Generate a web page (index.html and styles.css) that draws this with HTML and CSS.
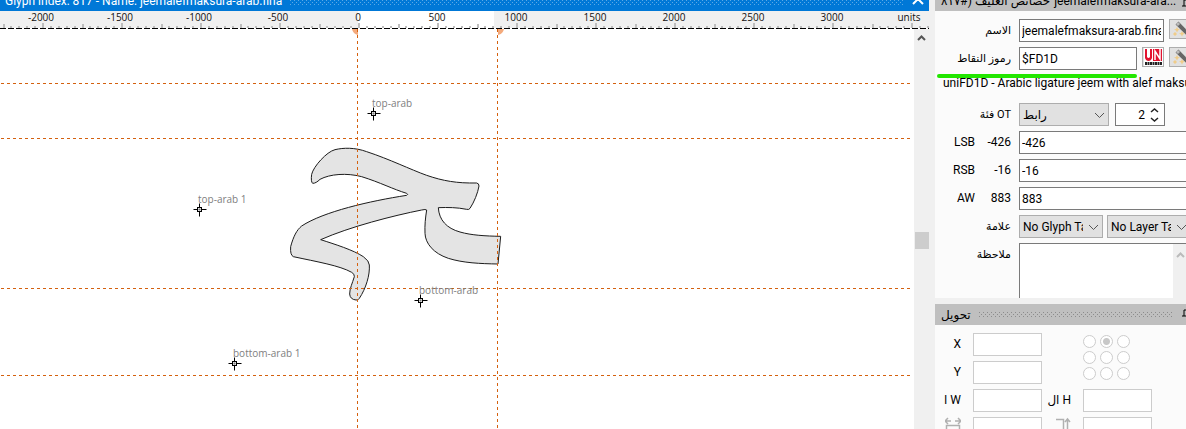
FILE: index.html
```html
<!DOCTYPE html>
<html lang="ar">
<head>
<meta charset="utf-8">
<title>Glyph editor</title>
<link rel="stylesheet" href="styles.css">
</head>
<body>
<div class="app">
  <main class="editor">
    <header class="titlebar">
      <span class="titlebar-text">Glyph index: 817 - Name: jeemalefmaksura-arab.fina</span>
      <span class="grip grip-blue"></span>
      <button class="close" aria-label="Close"><svg width="12" height="12" viewBox="0 0 12 12"><path d="M1 1l10 10M11 1L1 11" stroke="#fff" stroke-width="2"/></svg></button>
    </header>
    <div class="workspace">
      <svg class="canvas">
        <defs>
          <pattern id="ticks" x="42" y="0" width="158" height="6" patternUnits="userSpaceOnUse">
            <path fill="#bdbdbd" d="M0 0h2v6h-2zM8 3h2v2h-2zM16 3h2v2h-2zM24 3h2v2h-2zM32 3h2v2h-2zM40 1h2v4h-2zM47 3h2v2h-2zM55 3h2v2h-2zM63 3h2v2h-2zM71 3h2v2h-2zM79 0h2v6h-2zM87 3h2v2h-2zM95 3h2v2h-2zM103 3h2v2h-2zM111 3h2v2h-2zM119 1h2v4h-2zM126 3h2v2h-2zM134 3h2v2h-2zM142 3h2v2h-2zM150 3h2v2h-2z"/>
          </pattern>
          <g id="anchor">
            <path d="M-6 0h13M0-6v13" stroke="#000" fill="none"/>
            <rect x="-2" y="-2" width="4" height="4" fill="#fff" stroke="#000"/>
            <rect x="-1" y="-1" width="2" height="2" fill="#777"/>
          </g>
        </defs>
        <rect width="100%" height="17" fill="#f0f0f0"/>
        <rect x="358" width="136" height="17" fill="#fff"/>
        <g transform="translate(0 12)"><rect width="100%" height="5" fill="url(#ticks)"/></g>
        <path d="M0 17.5H929" stroke="#000" stroke-dasharray="6 2"/>
        <g class="ruler-text">
          <text x="41" y="10">-2000</text><text x="120" y="10">-1500</text><text x="199" y="10">-1000</text><text x="278" y="10">-500</text><text x="358" y="10">0</text><text x="437" y="10">500</text><text x="516" y="10">1000</text><text x="595" y="10">1500</text><text x="674" y="10">2000</text><text x="753" y="10">2500</text><text x="832" y="10">3000</text><text x="909" y="10">units</text>
        </g>
        <path fill="#f4aa7c" d="M352 18h6v6q-5-1-6-6zM498 18h6q-1 5-6 6z"/>
        <svg x="280" y="119" width="240" height="180" viewBox="0 0 720 540">
          <path fill="#e4e4e4" stroke="#1c1c1c" stroke-width="3" stroke-linejoin="round" d="M95 133C100 110 140 65 165 59C190 53 225 52 260 65C330 88 390 118 440 136C490 153 530 160 590 159Q597 160 597 168C593 190 583 215 570 235Q567 240 560 238C530 232 505 232 475 233C477 270 500 295 540 306C575 316 615 318 662 319L654 402C600 401 550 399 505 385C460 370 436 340 435 310C434 285 436 265 440 240Q437 237 425 240C340 257 210 290 122 329C165 343 220 360 250 380Q268 393 268 405C270 435 258 475 238 505Q235 511 228 510Q210 508 209 492C209 475 217 460 223 440Q224 432 215 427C180 407 110 395 40 380Q30 375 32 350C40 320 50 300 65 288C130 245 270 213 380 196Q386 193 380 190C340 178 300 157 245 140C200 128 150 132 120 148C112 156 105 160 98 160Q92 155 95 133Z"/>
        </svg>
        <path class="guide" d="M1 72.5H911M1 127.5H911M1 277.5H911M1 364.5H911M357.5 18V1000M497.5 18V1000"/>
        <g class="anchor-text">
          <text x="372" y="96">top-arab</text><text x="198" y="192">top-arab 1</text><text x="419" y="283">bottom-arab</text><text x="233" y="346">bottom-arab 1</text>
        </g>
        <use href="#anchor" x="373.5" y="102.5"/><use href="#anchor" x="199.5" y="198.5"/><use href="#anchor" x="420.5" y="289.5"/><use href="#anchor" x="234.5" y="352.5"/>
      </svg>
      <div class="scrollbar">
        <svg width="9" height="6" viewBox="0 0 9 6"><path d="M1 5l3.500-3.500L8 5" fill="none" stroke="#555" stroke-width="2"/></svg>
        <span class="thumb"></span>
      </div>
    </div>
  </main>

  <aside class="side">
    <section class="panel props">
      <header class="panel-head head-cut">
        <span dir="rtl">خصائص الغليف (#٨١٧</span><span class="head-name">jeemalefmaksura-ara...</span>
        <svg class="pin" width="12" height="12" viewBox="0 0 12 12"><path d="M2 7h9M4 7V1h5v6M6.500 7v4" fill="none" stroke="#000"/></svg>
      </header>
      <div class="form">
        <label class="label" dir="rtl" for="name">الاسم</label>
        <div class="field"><input id="name" class="w-name" value="jeemalefmaksura-arab.fina">
          <button class="tool wand" aria-label="Auto name"><svg width="20" height="18" viewBox="0 0 20 18"><path d="M6 3l13 13" stroke="#666" stroke-width="4"/><path d="M6 3l2 2" stroke="#bbb" stroke-width="3"/><g fill="#f0cc88"><path d="M6 7l1 2 2 .5-2 1-1 2-1-2-2-1 2-.500z"/><path d="M11 11l1 2 2 .5-2 1-1 2-1-2-2-1 2-.500zM4 12l1 1 1 1-1 1-1 1-1-1-1-1 1-1z"/></g></svg></button></div>

        <label class="label" dir="rtl" for="code">رموز النقاط</label>
        <div class="field"><input id="code" class="w-code" value="$FD1D">
          <button class="tool uni" aria-label="Unicode"><svg width="19" height="18" viewBox="0 0 19 18"><path fill="#fff" d="M0 0h19v18H0z"/><path fill="#e2122f" d="M9 1h9v12H9zM1 1h2v8q1.500 2 3 0V1h2v9q-1 3-3.500 3T1 10z"/><path d="M11 12V3l5 8V1" fill="none" stroke="#fff" stroke-width="1.500"/><path d="M1 15.500h17" stroke="#222" stroke-width="3" stroke-dasharray="2 .500"/></svg></button>
          <button class="tool wand" aria-label="Auto code"><svg width="20" height="18" viewBox="0 0 20 18"><path d="M6 3l13 13" stroke="#666" stroke-width="4"/><path d="M6 3l2 2" stroke="#bbb" stroke-width="3"/><g fill="#f0cc88"><path d="M6 7l1 2 2 .5-2 1-1 2-1-2-2-1 2-.500z"/><path d="M11 11l1 2 2 .5-2 1-1 2-1-2-2-1 2-.500zM4 12l1 1 1 1-1 1-1 1-1-1-1-1 1-1z"/></g></svg></button>
          <span class="marker"></span></div>

        <p class="uniname">uniFD1D - Arabic ligature jeem with alef maksura final form</p>

        <label class="label" dir="rtl" for="otclass">OT فئة</label>
        <div class="field field-ot">
          <span class="select w-ot"><select id="otclass"><option>رابط</option></select><svg width="11" height="7" viewBox="0 0 11 7"><path d="M1 1l4.500 4.500L10 1" fill="none" stroke="#555"/></svg></span>
          <span class="spinner"><input aria-label="Count" value="2"><svg width="9" height="14" viewBox="0 0 9 14"><path d="M1 4l3.500-3L8 4M1 10l3.500 3L8 10" fill="none" stroke="#222" stroke-width="1.500"/></svg></span>
        </div>

        <label class="label" for="lsb">LSB<b>-426</b></label><div class="field"><input id="lsb" class="w-full" value="-426"></div>
        <label class="label" for="rsb">RSB<b>-16</b></label><div class="field"><input id="rsb" class="w-full" value="-16"></div>
        <label class="label" for="aw">AW<b>883</b></label><div class="field"><input id="aw" class="w-full" value="883"></div>

        <label class="label" dir="rtl" for="gtag">علامة</label>
        <div class="field field-tags">
          <span class="select w-tag"><select id="gtag"><option>No Glyph Tag</option></select><svg width="11" height="7" viewBox="0 0 11 7"><path d="M1 1l4.500 4.500L10 1" fill="none" stroke="#555"/></svg></span>
          <span class="select w-tag"><select aria-label="Layer tag"><option>No Layer Tag</option></select><svg width="11" height="7" viewBox="0 0 11 7"><path d="M1 1l4.500 4.500L10 1" fill="none" stroke="#555"/></svg></span>
        </div>

        <label class="label" dir="rtl" for="note">ملاحظة</label>
        <div class="field note"><textarea id="note"></textarea><span class="note-scroll"><svg width="9" height="6" viewBox="0 0 9 6"><path d="M1 5l3.500-3.500L8 5" fill="none" stroke="#bbb" stroke-width="2"/></svg></span></div>
      </div>
    </section>

    <section class="panel transform">
      <header class="panel-head"><span dir="rtl">تحويل</span><span class="grip grip-gray"></span>
        <svg class="pin" width="12" height="12" viewBox="0 0 12 12"><path d="M2 7h9M4 7V1h5v6M6.500 7v4" fill="none" stroke="#000"/></svg></header>
      <div class="tgrid">
        <label class="row-start" for="tx">X</label><input id="tx">
        <label class="row-start" for="ty">Y</label><input id="ty">
        <div class="origin">
          <input type="radio" name="origin" aria-label="Top left"><input type="radio" name="origin" aria-label="Top" checked><input type="radio" name="origin" aria-label="Top right">
          <input type="radio" name="origin" aria-label="Left"><input type="radio" name="origin" aria-label="Centre"><input type="radio" name="origin" aria-label="Right">
          <input type="radio" name="origin" aria-label="Bottom left"><input type="radio" name="origin" aria-label="Bottom"><input type="radio" name="origin" aria-label="Bottom right">
        </div>
        <label class="row-start" for="tw">ا W</label><input id="tw">
        <label for="th">ال H</label><input id="th">
        <label class="row-start" for="sw" aria-label="Scale width"><svg width="16" height="20" viewBox="0 0 16 20"><path d="M0 4h6M10 4h6M3 1L0 4l3 3M13 1l3 3-3 3M1.500 20V8.500h13V20" fill="none" stroke="#b0b0b0" stroke-width="1.500"/></svg></label><input id="sw">
        <label for="sh" aria-label="Scale height"><svg width="16" height="20" viewBox="0 0 16 20"><path d="M1 2.500h7.500V20M12.500 20V2M10 5l2.500-3L15 5" fill="none" stroke="#b0b0b0" stroke-width="1.500"/></svg></label><input id="sh">
      </div>
    </section>
  </aside>
</div>
</body>
</html>
```

FILE: styles.css
```css
* { box-sizing: border-box; }
body {
  margin: 0;
  overflow: hidden;
  background: #f0f0f0;
  color: #000;
  font: 12px/16px Roboto, "Noto Sans", "DejaVu Sans", sans-serif;
}
input, select, textarea, button { font: inherit; color: inherit; margin: 0; }
svg { display: block; flex: none; }

.app { display: flex; gap: 6px; height: 100vh; }

.editor { flex: 1; min-width: 0; display: flex; flex-direction: column; }
.titlebar {
  display: flex;
  align-items: flex-end;
  gap: 8px;
  height: 11px;
  padding: 0 5px;
  background: #0078d7;
  color: #fff;
  overflow: hidden;
}
.titlebar-text { white-space: nowrap; line-height: 20px; }
.grip { flex: 1; height: 5px; background-size: 4px 4px; background-position: 0 0, 2px 2px; }
.grip-blue {
  align-self: flex-start;
  background-image: conic-gradient(from 270deg at 1px 1px, #5ba9e6 90deg, transparent 0), conic-gradient(from 270deg at 1px 1px, #5ba9e6 90deg, transparent 0);
}
.close { display: flex; align-items: flex-end; height: 11px; padding: 0 0 6px; border: 0; background: none; }

.workspace { flex: 1; display: flex; position: relative; min-height: 0; background: #fff; }
.canvas { width: 100%; height: 100%; }
.ruler-text { font-family: "Open Sans", "Noto Sans", sans-serif; font-size: 10px; fill: #111; text-anchor: middle; }
.anchor-text { font-family: "Open Sans", "Noto Sans", sans-serif; font-size: 10px; fill: #808080; }
.guide { fill: none; stroke: #d4610f; stroke-dasharray: 3 3; }
.scrollbar {
  position: absolute;
  right: 0;
  top: 18px;
  bottom: 0;
  width: 15px;
  display: flex;
  flex-direction: column;
  align-items: center;
  padding-top: 6px;
  background: #f0f0f0;
}
.thumb { width: 14px; height: 17px; margin-top: 191px; background: #cdcdcd; }

.side { flex: none; width: 251px; display: flex; flex-direction: column; gap: 6px; overflow: hidden; }
.panel { background: #fbfbfb; overflow: hidden; }
.props { flex: none; height: 298px; }
.transform { flex: 1; }
.panel-head {
  display: flex;
  align-items: center;
  gap: 8px;
  height: 21px;
  padding-left: 6px;
  background: #bfbfbf;
  white-space: nowrap;
}
.head-cut { height: 11px; align-items: flex-end; gap: 4px; line-height: 20px; }
.head-name { flex: 1; }
.pin { margin-right: -6px; }
.grip-gray {
  height: 6px;
  background-image: conic-gradient(from 270deg at 1px 1px, #8c8c8c 90deg, transparent 0), conic-gradient(from 270deg at 1px 1px, #8c8c8c 90deg, transparent 0);
}

.form { display: grid; grid-template-columns: 76px 1fr; gap: 5px 8px; padding-top: 8px; }
.label { height: 23px; line-height: 23px; white-space: nowrap; }
.label[dir="rtl"] { font-size: 11px; text-align: start; }
.label:not([dir]) { text-align: right; }
.label b { display: inline-block; width: 36px; font-weight: 400; text-align: right; }
.field { display: flex; gap: 5px; height: 23px; position: relative; min-width: 0; }
.field input, .tgrid > input {
  height: 23px;
  border: 1px solid #7a7a7a;
  border-radius: 0;
  background: #fff;
  padding: 0 2px;
  flex: none;
}
.field .w-name { width: 145px; }
.field .w-code { width: 118px; }
.field .w-full { width: 180px; }
.tool {
  display: grid;
  place-items: center;
  flex: none;
  height: 20px;
  padding: 0;
  border: 1px solid #adadad;
  background: #e1e1e1;
}
.wand { width: 24px; }
.uni { width: 22px; }
.marker {
  position: absolute;
  left: -82px;
  top: 27px;
  width: 200px;
  height: 4px;
  border-radius: 2px;
  background: #22e600;
}
.uniname { grid-column: 1 / -1; height: 23px; margin: 0; padding-left: 8px; white-space: nowrap; overflow: hidden; }
.field-ot { gap: 6px; }
.field-tags { gap: 4px; }
.select { position: relative; flex: none; height: 23px; }
.select select {
  width: 100%;
  height: 100%;
  appearance: none;
  border: 1px solid #adadad;
  border-radius: 0;
  background: #e1e1e1;
  padding: 0 19px 0 3px;
}
.select svg { position: absolute; right: 4px; top: 9px; }
.w-ot { width: 90px; }
.w-tag { width: 84px; }
.spinner { position: relative; }
.spinner input { width: 50px; padding-right: 19px; text-align: right; }
.spinner svg { position: absolute; right: 6px; top: 5px; }
.note { height: 70px; }
.note textarea { width: 180px; flex: none; height: 70px; resize: none; border: 1px solid #7a7a7a; background: #fff; }
.note-scroll { position: absolute; left: 154px; top: 1px; width: 17px; height: 68px; padding: 8px 3px; background: #f0f0f0; }

.tgrid {
  display: grid;
  grid-template-columns: 18px 69px 17px 69px;
  gap: 5px 12px;
  padding: 8px;
}
.tgrid > label { display: flex; justify-content: flex-end; align-items: flex-start; height: 23px; line-height: 23px; white-space: nowrap; }
.tgrid > .row-start { grid-column: 1; }
.tgrid > input { width: 69px; border-color: #ccc; }
.origin {
  grid-column: 4;
  grid-row: 1 / span 2;
  display: grid;
  grid-template-columns: repeat(3, 13px);
  grid-auto-rows: 13px;
  gap: 3px 4px;
  padding-top: 2px;
}
.origin input { appearance: none; width: 13px; height: 13px; margin: 0; border: 1px solid #ccc; border-radius: 50%; background: #fff; }
.origin input:checked { background: radial-gradient(circle, #c8c8c8 3px, #fff 4px); }
```
